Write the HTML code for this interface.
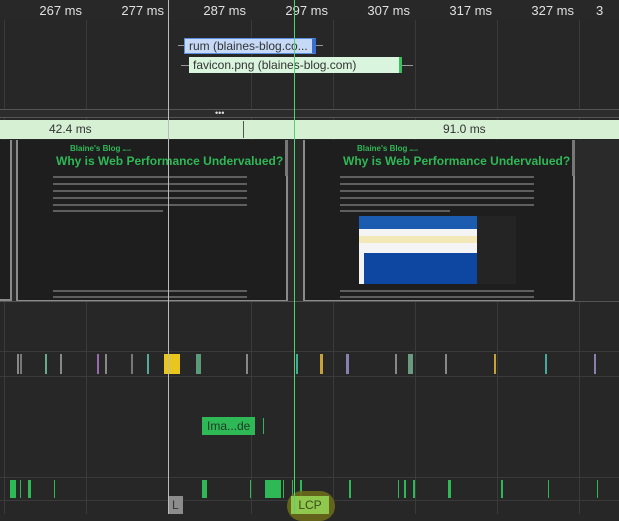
<!DOCTYPE html>
<html><head><meta charset="utf-8"><style>
*{margin:0;padding:0;box-sizing:border-box}
body{width:619px;height:514px;background:#272727;position:relative;overflow:hidden;font-family:"Liberation Sans",sans-serif}
.a{position:absolute}
.g{position:absolute;top:0;bottom:0;width:1px;background:#3a3a3a}
.t{position:absolute;top:3px;color:#e0e0e0;font-size:13px;text-align:right;width:60px}
.h{position:absolute;left:0;right:0;height:1px;background:#444}
.ln{position:absolute;left:53px;width:194px;height:2px;background:#8a8a8a;opacity:.6}
.e{position:absolute;top:354px;height:20px;width:2px}
.b{position:absolute;top:480px;height:18px;width:2px;background:#2fb856}
</style></head><body>
<div class="g" style="left:4px"></div><div class="g" style="left:86px"></div><div class="g" style="left:251px"></div><div class="g" style="left:333px"></div><div class="g" style="left:415px"></div><div class="g" style="left:497px"></div><div class="g" style="left:579px"></div>
<div class="a" style="left:0;top:0;width:619px;height:20px;background:#282828"></div>
<div class="t" style="left:22px">267 ms</div><div class="t" style="left:104px">277 ms</div><div class="t" style="left:186px">287 ms</div><div class="t" style="left:268px">297 ms</div><div class="t" style="left:350px">307 ms</div><div class="t" style="left:432px">317 ms</div><div class="t" style="left:514px">327 ms</div><div class="t" style="left:596px;text-align:left">3</div>
<div class="a" style="left:178px;top:45px;width:6px;height:1px;background:#999"></div>
<div class="a" style="left:316px;top:45px;width:7px;height:1px;background:#999"></div>
<div class="a" style="left:184px;top:38px;width:132px;height:16px;background:#c6d9f7;border:1px solid #5a8ee0;border-right:4px solid #3a6fd0;color:#333;font-size:12px;line-height:14px;padding-left:4px;white-space:nowrap;overflow:hidden">rum (blaines-blog.co...</div>
<div class="a" style="left:181px;top:65px;width:8px;height:1px;background:#999"></div>
<div class="a" style="left:402px;top:65px;width:11px;height:1px;background:#999"></div>
<div class="a" style="left:189px;top:57px;width:213px;height:16px;background:#daf5de;border-right:3px solid #3cc05c;color:#333;font-size:12px;line-height:16px;padding-left:4px;white-space:nowrap">favicon.png (blaines-blog.com)</div>
<div class="h" style="top:109px;background:#555"></div>
<div class="a" style="left:0;top:110px;width:619px;height:7px;background:#2c2c2c"></div>
<div class="a" style="left:215px;top:110px;color:#ddd;font-size:9px;line-height:6px">•••</div>
<div class="h" style="top:117px;background:#555"></div>
<div class="a" style="left:0;top:120px;width:619px;height:19px;background:#d6f0d4;color:#333;font-size:12px;line-height:19px"><span class="a" style="left:49px">42.4 ms</span><span class="a" style="left:443px">91.0 ms</span></div>
<div class="a" style="left:243px;top:121px;width:1px;height:17px;background:#555"></div>
<div class="a" style="left:0;top:140px;width:619px;height:162px;background:#2a2a2a"></div>
<div class="a" style="left:0;top:140px;width:12px;height:161px;border-right:2px solid #8a8a8a;border-bottom:2px solid #8a8a8a;background:#1e1e1e"></div>
<div class="a" style="left:16px;top:140px;width:272px;height:162px;border:2px solid #8a8a8a;border-top:none;background:#1e1e1e"></div>
<div class="a" style="left:303px;top:140px;width:272px;height:162px;border:2px solid #8a8a8a;border-top:none;background:#1e1e1e"></div>
<div class="a" style="left:285px;top:140px;width:3px;height:36px;background:#777"></div>
<div class="a" style="left:572px;top:140px;width:3px;height:36px;background:#777"></div>
<div class="a" style="left:70px;top:144px;color:#2fb856;font-size:8px;font-weight:bold">Blaine's Blog <span style="font-size:3px">about</span></div>
<div class="a" style="left:56px;top:154px;color:#2fb856;font-size:12px;font-weight:bold;white-space:nowrap">Why is Web Performance Undervalued?</div>
<div class="a" style="left:357px;top:144px;color:#2fb856;font-size:8px;font-weight:bold">Blaine's Blog <span style="font-size:3px">about</span></div>
<div class="a" style="left:343px;top:154px;color:#2fb856;font-size:12px;font-weight:bold;white-space:nowrap">Why is Web Performance Undervalued?</div>
<div class="ln" style="top:176px"></div><div class="ln" style="top:183px"></div><div class="ln" style="top:190px"></div><div class="ln" style="top:197px"></div><div class="ln" style="top:204px"></div><div class="ln" style="top:210px;width:110px"></div>
<div class="ln" style="top:290px"></div><div class="ln" style="top:296px"></div>
<div class="ln" style="left:340px;top:176px"></div><div class="ln" style="left:340px;top:183px"></div><div class="ln" style="left:340px;top:190px"></div><div class="ln" style="left:340px;top:197px"></div><div class="ln" style="left:340px;top:204px"></div><div class="ln" style="left:340px;top:210px;width:110px"></div>
<div class="ln" style="left:340px;top:290px"></div><div class="ln" style="left:340px;top:296px"></div>
<div class="a" style="left:359px;top:216px;width:118px;height:68px;background:#f4f4f4"></div>
<div class="a" style="left:359px;top:216px;width:118px;height:13px;background:#1b5bb0"></div>
<div class="a" style="left:359px;top:236px;width:118px;height:7px;background:#f3e9b8"></div>
<div class="a" style="left:364px;top:253px;width:113px;height:31px;background:#0d47a1"></div>
<div class="a" style="left:477px;top:216px;width:39px;height:68px;background:#242424"></div>
<div class="a" style="left:0;top:301px;width:619px;height:1px;background:#555"></div>
<div class="h" style="top:351px;background:#3a3a3a"></div><div class="h" style="top:376px;background:#3a3a3a"></div>
<div class="e" style="left:17px;background:#888"></div><div class="e" style="left:20px;background:#777"></div>
<div class="e" style="left:45px;background:#6a8"></div><div class="e" style="left:60px;background:#888"></div>
<div class="e" style="left:97px;background:#9a6ab0"></div><div class="e" style="left:105px;background:#888"></div>
<div class="e" style="left:131px;background:#777"></div><div class="e" style="left:147px;background:#5a9"></div>
<div class="e" style="left:164px;width:16px;background:#e8c61e"></div>
<div class="e" style="left:196px;width:5px;background:#5a9a78"></div><div class="e" style="left:246px;background:#888"></div>
<div class="e" style="left:296px;background:#4a9"></div><div class="e" style="left:320px;width:3px;background:#c9a236"></div>
<div class="e" style="left:346px;width:3px;background:#8a80b0"></div><div class="e" style="left:395px;background:#888"></div>
<div class="e" style="left:408px;width:5px;background:#6a9a80"></div><div class="e" style="left:445px;background:#888"></div>
<div class="e" style="left:494px;background:#c9a236"></div><div class="e" style="left:545px;background:#4a9"></div><div class="e" style="left:594px;background:#8a80b0"></div>
<div class="a" style="left:202px;top:417px;width:53px;height:18px;background:#2fb856;color:#1d3a25;font-size:12px;line-height:18px;padding-left:5px">Ima...de</div>
<div class="a" style="left:263px;top:418px;width:1px;height:16px;background:#2fb856"></div>
<div class="h" style="top:477px;background:#3a3a3a"></div><div class="h" style="top:500px;background:#3a3a3a"></div>
<div class="b" style="left:10px;width:6px"></div><div class="b" style="left:20px;width:1px"></div><div class="b" style="left:28px;width:3px"></div><div class="b" style="left:54px;width:1px"></div>
<div class="b" style="left:202px;width:5px"></div><div class="b" style="left:250px;width:1px"></div><div class="b" style="left:265px;width:16px"></div><div class="b" style="left:283px;width:1px"></div>
<div class="b" style="left:292px;width:1px"></div><div class="b" style="left:300px"></div><div class="b" style="left:349px"></div><div class="b" style="left:398px;width:1px"></div>
<div class="b" style="left:404px"></div><div class="b" style="left:413px"></div><div class="b" style="left:448px;width:3px"></div><div class="b" style="left:501px"></div><div class="b" style="left:548px;width:1px"></div><div class="b" style="left:597px;width:1px"></div>
<div class="a" style="left:168px;top:496px;width:15px;height:18px;background:#8c8c8c;color:#333;font-size:12px;line-height:18px;padding-left:4px">L</div>
<div class="a" style="left:287px;top:491px;width:48px;height:30px;border-radius:24px;background:#6b6a1c;opacity:.9"></div>
<div class="a" style="left:291px;top:496px;width:38px;height:18px;background:#8fc84c;color:#3a4a20;font-size:12px;line-height:18px;text-align:center">LCP</div>
<div class="a" style="left:168px;top:0;width:1px;height:514px;background:#bbb"></div>
<div class="a" style="left:294px;top:0;width:1px;height:514px;background:#4fd36f"></div>
</body></html>
